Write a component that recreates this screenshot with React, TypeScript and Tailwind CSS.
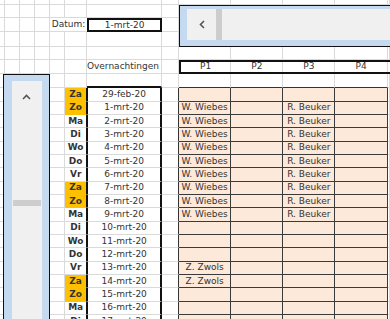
import React from "react";

const C = [
  "w-[5px]",
  "w-[14.5px]",
  "w-[15px]",
  "w-[15.5px]",
  "w-[15px]",
  "w-[22.3px]",
  "w-[74.7px]",
  "w-[17px]",
  "w-[52.3px]",
  "w-[52px]",
  "w-[52px]",
  "w-[52.5px]",
  "w-[2.2px]",
];

const DAYS: [string, string][] = [
  ["Za", "29-feb-20"],
  ["Zo", "1-mrt-20"],
  ["Ma", "2-mrt-20"],
  ["Di", "3-mrt-20"],
  ["Wo", "4-mrt-20"],
  ["Do", "5-mrt-20"],
  ["Vr", "6-mrt-20"],
  ["Za", "7-mrt-20"],
  ["Zo", "8-mrt-20"],
  ["Ma", "9-mrt-20"],
  ["Di", "10-mrt-20"],
  ["Wo", "11-mrt-20"],
  ["Do", "12-mrt-20"],
  ["Vr", "13-mrt-20"],
  ["Za", "14-mrt-20"],
  ["Zo", "15-mrt-20"],
  ["Ma", "16-mrt-20"],
  ["Di", "17-mrt-20"],
];

function p1(i: number) {
  if (i >= 1 && i <= 9) return "W. Wiebes";
  if (i === 13 || i === 14) return "Z. Zwols";
  return "";
}
function p3(i: number) {
  return i >= 1 && i <= 9 ? "R. Beuker" : "";
}

const grid = "shrink-0 border-r border-b border-[#dadada]";

function Blank({ w, extra = "" }: { w: string; extra?: string }) {
  return <div className={`${w} ${grid} ${extra}`} />;
}

function BlankRow({ h }: { h: string }) {
  return (
    <div className={`flex ${h}`}>
      {C.map((w, i) => (
        <Blank key={i} w={w} />
      ))}
    </div>
  );
}

export default function App() {
  return (
    <div className="relative h-[319px] w-[390px] overflow-hidden bg-white font-['DejaVu_Sans',sans-serif] text-[9px] leading-none text-[#333]">
      {/* sheet */}
      <BlankRow h="h-[4.7px]" />
      <BlankRow h="h-[13.6px]" />
      {/* Datum */}
      <div className="flex h-[14px]">
        {C.slice(0, 4).map((w, i) => (
          <Blank key={i} w={w} />
        ))}
        <div className="flex w-[37.3px] shrink-0 items-center justify-end border-b border-[#dadada] pr-[2px] whitespace-nowrap">
          Datum:
        </div>
        <div className="flex w-[74.7px] shrink-0 items-center justify-center border-2 border-[#111]">1-mrt-20</div>
        {C.slice(7).map((w, i) => (
          <Blank key={i} w={w} />
        ))}
      </div>
      <BlankRow h="h-[14.4px]" />
      <BlankRow h="h-[13.3px]" />
      {/* header */}
      <div className="flex h-[14px]">
        {C.slice(0, 6).map((w, i) => (
          <Blank key={i} w={w} />
        ))}
        <div className={`flex ${C[6]} ${grid} items-center justify-end pr-[2px]`}>Overnachtingen</div>
        <Blank w={C[7]} />
        <div className="flex shrink-0 border-y-2 border-l-2 border-[#111]">
          {["P1", "P2", "P3", "P4"].map((p, i) => (
            <div
              key={p}
              className={`flex items-center justify-center border-r border-[#dadada] ${i === 0 ? "w-[50.3px]" : i === 3 ? "w-[52.5px]" : "w-[52px]"}`}
            >
              {p}
            </div>
          ))}
          <div className="w-[2.2px]" />
        </div>
      </div>
      <div className="flex h-[14.3px]">
        {C.slice(0, 6).map((w, i) => (
          <Blank key={i} w={w} />
        ))}
        <div className={`${C[6]} shrink-0 border-r border-b-2 border-r-[#dadada] border-b-[#111]`} />
        <Blank w={C[7]} />
        {C.slice(8, 12).map((w, i) => (
          <div key={i} className={`${w} shrink-0 border-r border-b border-r-[#dadada] border-b-[#333]`} />
        ))}
        <Blank w={C[12]} />
      </div>
      {/* days */}
      {DAYS.map(([d, date], i) => {
        const we = d === "Za" || d === "Zo";
        return (
          <div key={date} className="flex h-[13.33px]">
            {C.slice(0, 5).map((w, j) => (
              <Blank key={j} w={w} />
            ))}
            <div
              className={`flex ${C[5]} shrink-0 items-center justify-center border-r border-b border-r-[#111] font-bold ${
                we ? "border-b-[#ffc000] bg-[#ffc000]" : "border-b-[#dadada]"
              }`}
            >
              {d}
            </div>
            <div className={`flex ${C[6]} shrink-0 items-center justify-center border-r-2 border-l border-b border-x-[#111] border-b-[#dadada]`}>
              {date}
            </div>
            <div className={`${C[7]} shrink-0 border-r border-b border-r-[#333] border-b-[#dadada]`} />
            {C.slice(8, 12).map((w, j) => (
              <div key={j} className={`flex ${w} shrink-0 items-center justify-center border-r border-b border-[#3a3a3a] bg-[#fde9d9] whitespace-nowrap`}>
                {j === 0 ? p1(i) : j === 2 ? p3(i) : ""}
              </div>
            ))}
            <Blank w={C[12]} />
          </div>
        );
      })}

      {/* horizontal scroll bar (form control) */}
      <div className="absolute left-[179px] top-[4.7px] h-[42px] w-[220px] border-[1.5px] border-[#111] bg-[#c5d9f1] pt-[3px] pb-[5.5px] pl-[7px]">
        <div className="flex h-full bg-[#f0f0f0]">
          <div className="flex w-[29px] items-center justify-center">
            <svg width="6" height="9" viewBox="0 0 6 9">
              <path d="M5 1 L1.5 4.5 L5 8" fill="none" stroke="#555" strokeWidth="1.6" />
            </svg>
          </div>
          <div className="my-[0.7px] w-[6px] bg-[#cdcdcd]" />
        </div>
      </div>

      {/* vertical scroll bar (form control) */}
      <div className="absolute left-[3px] top-[74px] h-[260px] w-[47px] border-[1.5px] border-[#111] bg-[#c5d9f1] pl-[7.5px] pr-[7px] pt-[5.5px]">
        <div className="flex h-full flex-col bg-[#f0f0f0]">
          <div className="flex h-[32px] items-center justify-center">
            <svg width="9" height="6" viewBox="0 0 9 6">
              <path d="M1 5 L4.5 1.5 L8 5" fill="none" stroke="#555" strokeWidth="1.6" />
            </svg>
          </div>
          <div className="mx-[1px] mt-[87px] h-[6px] bg-[#cdcdcd]" />
        </div>
      </div>
    </div>
  );
}
